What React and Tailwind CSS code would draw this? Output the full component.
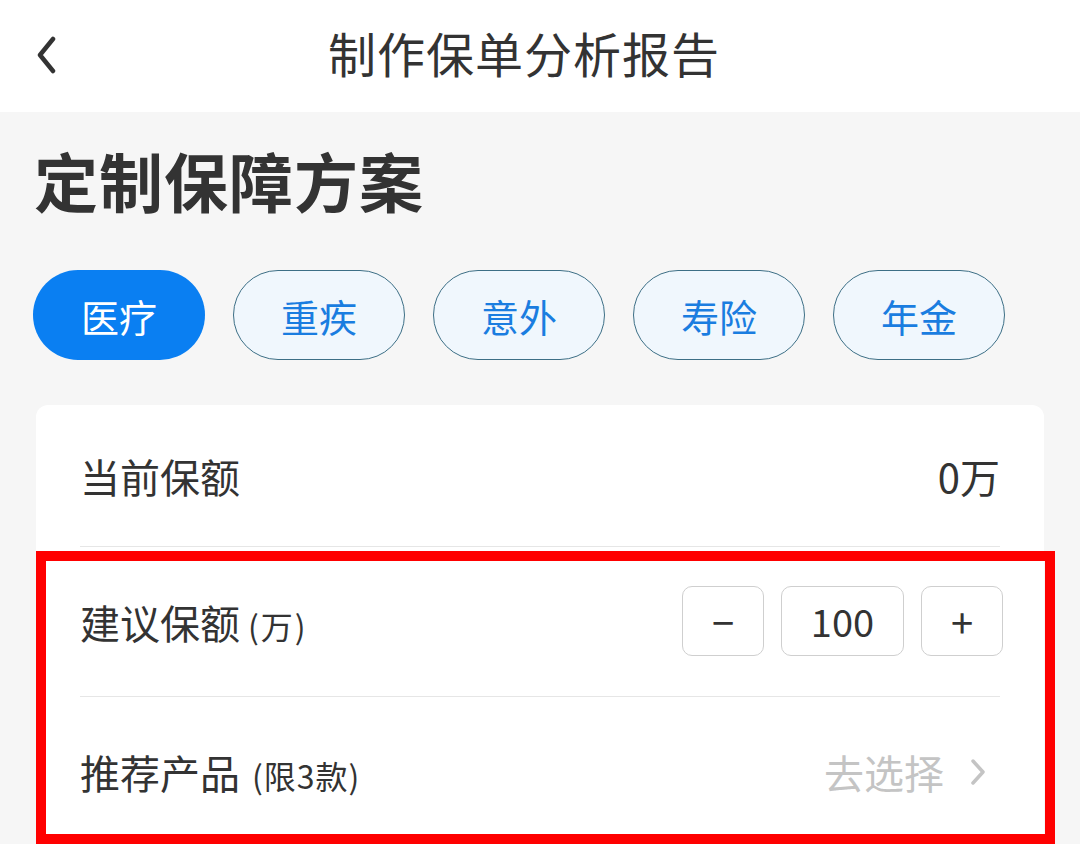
import { useState } from 'react';

const tabs = ['医疗', '重疾', '意外', '寿险', '年金'];

export default function App() {
  const [active, setActive] = useState(0);
  const [amount, setAmount] = useState(100);

  return (
    <div
      className="relative w-[1080px] h-[844px] overflow-hidden bg-[#f6f6f6] text-[#333]"
      style={{ fontFamily: '"Noto Sans CJK SC", "Noto Sans", sans-serif' }}
    >
      {/* Header */}
      <div className="relative h-[112px] bg-white flex items-center justify-center">
        <button className="absolute left-[30px] top-[34px] w-[32px] h-[42px] flex items-center justify-center">
          <svg width="24" height="38" viewBox="0 0 24 38" fill="none">
            <path d="M19 3 L6 19 L19 35" stroke="#333" strokeWidth="4.5" strokeLinecap="round" strokeLinejoin="round" />
          </svg>
        </button>
        <h1 className="text-[48px] leading-none font-normal tracking-[1px] pr-[32px] -mt-[8px]">制作保单分析报告</h1>
      </div>

      {/* Heading */}
      <div className="px-[34px] pt-[29px]">
        <h2 className="text-[64px] leading-[76px] font-bold tracking-[1px]">定制保障方案</h2>
      </div>

      {/* Tabs */}
      <div className="flex gap-[28px] px-[33px] mt-[53px]">
        {tabs.map((t, i) => (
          <button
            key={t}
            onClick={() => setActive(i)}
            className={
              i === active
                ? 'w-[172px] h-[90px] rounded-full bg-[#0a7ff2] text-white text-[38px] flex items-center justify-center'
                : 'w-[172px] h-[90px] rounded-full bg-[#f0f7fd] border border-[#3d6f86] text-[#1a7de0] text-[38px] flex items-center justify-center'
            }
          >
            {t}
          </button>
        ))}
      </div>

      {/* Card */}
      <div className="mx-[36px] mt-[45px] bg-white rounded-[12px]">
        <div className="mx-[44px] h-[142px] flex items-center justify-between border-b border-[#e6e6e6]">
          <span className="text-[40px]">当前保额</span>
          <span className="text-[40px]">0万</span>
        </div>
        <div className="mx-[44px] h-[150px] flex items-center justify-between border-b border-[#e6e6e6]">
          <span className="text-[40px] flex items-baseline">
            建议保额<span className="text-[32px] ml-[8px] tracking-[2px]">(万)</span>
          </span>
          <div className="flex gap-[17px] -mr-[3px] mb-[2px]">
            <button
              onClick={() => setAmount(Math.max(0, amount - 10))}
              className="w-[82px] h-[70px] rounded-[10px] border border-[#cfcfcf] text-[40px] flex items-center justify-center"
            >
              −
            </button>
            <div className="w-[123px] h-[70px] rounded-[10px] border border-[#cfcfcf] text-[38px] flex items-center justify-center">
              {amount}
            </div>
            <button
              onClick={() => setAmount(amount + 10)}
              className="w-[82px] h-[70px] rounded-[10px] border border-[#cfcfcf] text-[40px] flex items-center justify-center"
            >
              +
            </button>
          </div>
        </div>
        <div className="mx-[44px] h-[150px] flex items-center justify-between">
          <span className="text-[40px] flex items-baseline">
            推荐产品<span className="text-[32px] ml-[12px] tracking-[1px]">(限3款)</span>
          </span>
          <span className="flex items-center text-[40px] text-[#c4c4c4]">
            去选择
            <svg className="ml-[26px] mr-[14px]" width="16" height="28" viewBox="0 0 16 28" fill="none">
              <path d="M3 3 L13 14 L3 25" stroke="#c4c4c4" strokeWidth="3.5" strokeLinecap="round" strokeLinejoin="round" />
            </svg>
          </span>
        </div>
      </div>

      {/* Annotation box */}
      <div className="absolute left-[36px] top-[551px] w-[1019px] h-[293px] border-[10px] border-[#ff0000] pointer-events-none" />
    </div>
  );
}
